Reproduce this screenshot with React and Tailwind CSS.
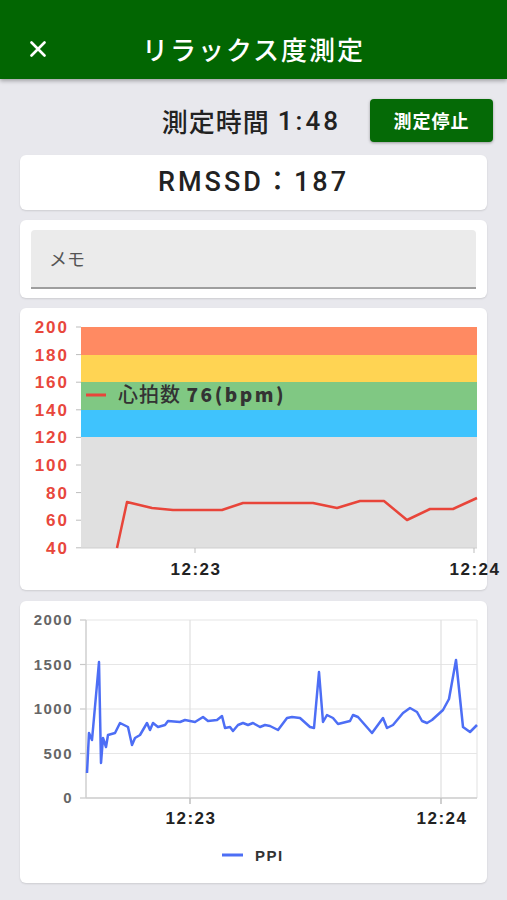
import React from 'react';

const hrPoints = [
    [97, 240], [107, 194], [132, 200], [153, 202], [202, 202], [223, 195], [293, 195],
    [317, 200], [340, 193], [364, 193], [387, 212], [410, 201], [433, 201], [457, 190]
];

const ppiPoints = [
    [67, 172], [69, 132], [72, 139], [79, 61], [81, 162], [83, 137], [86, 146], [88, 134],
    [95, 132], [100, 122], [108, 126], [112, 144], [115, 137], [120, 134], [127, 122], [130, 129],
    [133, 122], [138, 126], [145, 124], [148, 120], [160, 121], [165, 119], [175, 121], [183, 116],
    [188, 120], [197, 119], [202, 115], [205, 127], [210, 126], [213, 130], [218, 124], [223, 122],
    [228, 124], [233, 122], [240, 126], [245, 124], [250, 125], [258, 129], [267, 117], [272, 116],
    [280, 117], [290, 126], [294, 127], [299, 71], [303, 121], [307, 114], [313, 117], [318, 123],
    [330, 120], [333, 114], [338, 116], [345, 124], [352, 132], [363, 117], [367, 127], [373, 124],
    [383, 112], [390, 107], [397, 111], [402, 120], [407, 122], [412, 119], [423, 109], [429, 98],
    [436, 59], [443, 126], [450, 131], [457, 124]
];

const toPath = (pts) => pts.map((p) => p.join(',')).join(' ');

const axisFont = "'Liberation Sans', Arial, sans-serif";

const HeartChart = () => {
    const bands = [
        { y: 19, h: 28, fill: '#ff8a62' },
        { y: 47, h: 27, fill: '#ffd453' },
        { y: 74, h: 28, fill: '#80c883' },
        { y: 102, h: 27, fill: '#3fc3fd' },
        { y: 129, h: 111, fill: '#e0e0e0' }
    ];
    const labels = [200, 180, 160, 140, 120, 100, 80, 60, 40];

    return (
        <svg width="467" height="282" viewBox="0 0 467 282" className="overflow-visible block">
            {bands.map((b, i) => (
                <rect key={i} x="61" y={b.y} width="396" height={b.h} fill={b.fill} />
            ))}
            {labels.map((v, i) => {
                const y = 19 + i * 27.6;
                return (
                    <g key={v}>
                        <line x1="56" x2="61" y1={y} y2={y} stroke="#bdbdbd" strokeWidth="1" />
                        <text x="49" y={y + 6} textAnchor="end" fill="#e8473c" fontSize="17" fontWeight="700" letterSpacing="2" fontFamily={axisFont}>{v}</text>
                    </g>
                );
            })}
            <line x1="61" x2="457" y1="240" y2="240" stroke="#cfcfcf" strokeWidth="1" />
            <line x1="175" x2="175" y1="240" y2="245" stroke="#bdbdbd" strokeWidth="1" />
            <line x1="454" x2="454" y1="240" y2="245" stroke="#bdbdbd" strokeWidth="1" />
            <text x="176" y="267" textAnchor="middle" fill="#222" fontSize="17" fontWeight="700" letterSpacing="1.5" fontFamily={axisFont}>12:23</text>
            <text x="455" y="267" textAnchor="middle" fill="#222" fontSize="17" fontWeight="700" letterSpacing="1.5" fontFamily={axisFont}>12:24</text>
            <polyline points={toPath(hrPoints)} fill="none" stroke="#e8453a" strokeWidth="2.5" strokeLinejoin="round" />
            <line x1="66" x2="86" y1="87" y2="87" stroke="#e8453a" strokeWidth="3" />
            <text x="98" y="94" fill="#333" fontFamily="'Noto Sans CJK JP', sans-serif">
                <tspan fontSize="20" fontWeight="500" letterSpacing="1">心拍数 </tspan>
                <tspan fontSize="19" fontWeight="900" letterSpacing="2.5">76(bpm)</tspan>
            </text>
        </svg>
    );
};

const PpiChart = () => {
    const labels = [2000, 1500, 1000, 500, 0];
    return (
        <svg width="467" height="282" viewBox="0 0 467 282" className="overflow-visible block">
            {labels.map((v, i) => {
                const y = 19 + i * 44.5;
                return (
                    <g key={v}>
                        <line x1="66" x2="457" y1={y} y2={y} stroke="#e6e6e6" strokeWidth="1.2" />
                        <line x1="60" x2="66" y1={y} y2={y} stroke="#c8c8c8" strokeWidth="1.2" />
                        <text x="53" y={y + 5} textAnchor="end" fill="#666" fontSize="15" fontWeight="700" letterSpacing="1.5" fontFamily={axisFont}>{v}</text>
                    </g>
                );
            })}
            <line x1="170" x2="170" y1="19" y2="203" stroke="#e0e0e0" strokeWidth="1.2" />
            <line x1="421" x2="421" y1="19" y2="203" stroke="#e0e0e0" strokeWidth="1.2" />
            <line x1="457" x2="457" y1="19" y2="197" stroke="#e6e6e6" strokeWidth="1.2" />
            <line x1="66" x2="66" y1="19" y2="197" stroke="#cfcfcf" strokeWidth="1.5" />
            <line x1="66" x2="457" y1="197" y2="197" stroke="#cfcfcf" strokeWidth="1.5" />
            <line x1="170" x2="170" y1="197" y2="203" stroke="#bdbdbd" strokeWidth="1.2" />
            <line x1="421" x2="421" y1="197" y2="203" stroke="#bdbdbd" strokeWidth="1.2" />
            <text x="171" y="223" textAnchor="middle" fill="#222" fontSize="17" fontWeight="700" letterSpacing="1.5" fontFamily={axisFont}>12:23</text>
            <text x="422" y="223" textAnchor="middle" fill="#222" fontSize="17" fontWeight="700" letterSpacing="1.5" fontFamily={axisFont}>12:24</text>
            <polyline points={toPath(ppiPoints)} fill="none" stroke="#4d6ef5" strokeWidth="2.5" strokeLinejoin="round" />
            <line x1="202" x2="223" y1="254" y2="254" stroke="#4d6ef5" strokeWidth="3" />
            <text x="235" y="260" fill="#333" fontSize="15" fontWeight="700" letterSpacing="1.5" fontFamily={axisFont}>PPI</text>
        </svg>
    );
};

const App = () => {
    return (
        <div className="w-[507px] h-[900px] bg-[#e8e8ed] overflow-hidden" style={{ fontFamily: "Roboto, 'Noto Sans CJK JP', sans-serif" }}>
            <div className="h-[79px] pt-[18px] bg-[#026602] shadow-[0_2px_4px_rgba(0,0,0,0.3)] relative flex items-center justify-center">
                <svg className="absolute left-[30px] top-[41px]" width="16" height="16" viewBox="0 0 16 16">
                    <path d="M1.5 1.5 L14.5 14.5 M14.5 1.5 L1.5 14.5" stroke="#fff" strokeWidth="2.6" strokeLinecap="round" />
                </svg>
                <h1 className="text-white text-[26px] font-medium tracking-[2px] leading-none" style={{ fontFamily: "'Noto Sans CJK JP', sans-serif" }}>リラックス度測定</h1>
            </div>

            <div className="px-[20px]">
                <div className="flex items-center justify-end gap-[29px] mt-[20px] mr-[-6px] h-[43px]">
                    <div className="flex items-center text-[#222] leading-none">
                        <span className="text-[26px] font-medium tracking-[1px]" style={{ fontFamily: "'Noto Sans CJK JP', sans-serif" }}>測定時間</span>
                        <span className="text-[26px] font-medium tracking-[3px] ml-[8px]">1:48</span>
                    </div>
                    <button className="w-[123px] h-[43px] bg-[#056a06] rounded-[4px] shadow-[0_1px_3px_rgba(0,0,0,0.35)] text-white text-[18px] font-bold tracking-[1px]" style={{ fontFamily: "'Noto Sans CJK JP', sans-serif" }}>
                        測定停止
                    </button>
                </div>

                <div className="mt-[13px] h-[55px] bg-white rounded-[6px] shadow-[0_1px_2px_rgba(0,0,0,0.12)] flex items-center justify-center">
                    <span className="text-[27px] font-medium text-[#222] tracking-[3px] leading-none">RMSSD：187</span>
                </div>

                <div className="mt-[10px] h-[78px] bg-white rounded-[6px] shadow-[0_1px_2px_rgba(0,0,0,0.12)] p-[10px] px-[11px]">
                    <div className="h-[59px] bg-[#ebebeb] rounded-t-[4px] border-b-2 border-[#9e9e9e] flex items-center pl-[18px]">
                        <span className="text-[18px] text-[#555]" style={{ fontFamily: "'Noto Sans CJK JP', sans-serif" }}>メモ</span>
                    </div>
                </div>

                <div className="mt-[10px] h-[282px] bg-white rounded-[6px] shadow-[0_1px_2px_rgba(0,0,0,0.12)]">
                    <HeartChart />
                </div>

                <div className="mt-[11px] h-[282px] bg-white rounded-[6px] shadow-[0_1px_2px_rgba(0,0,0,0.12)]">
                    <PpiChart />
                </div>
            </div>
        </div>
    );
};

export default App;
